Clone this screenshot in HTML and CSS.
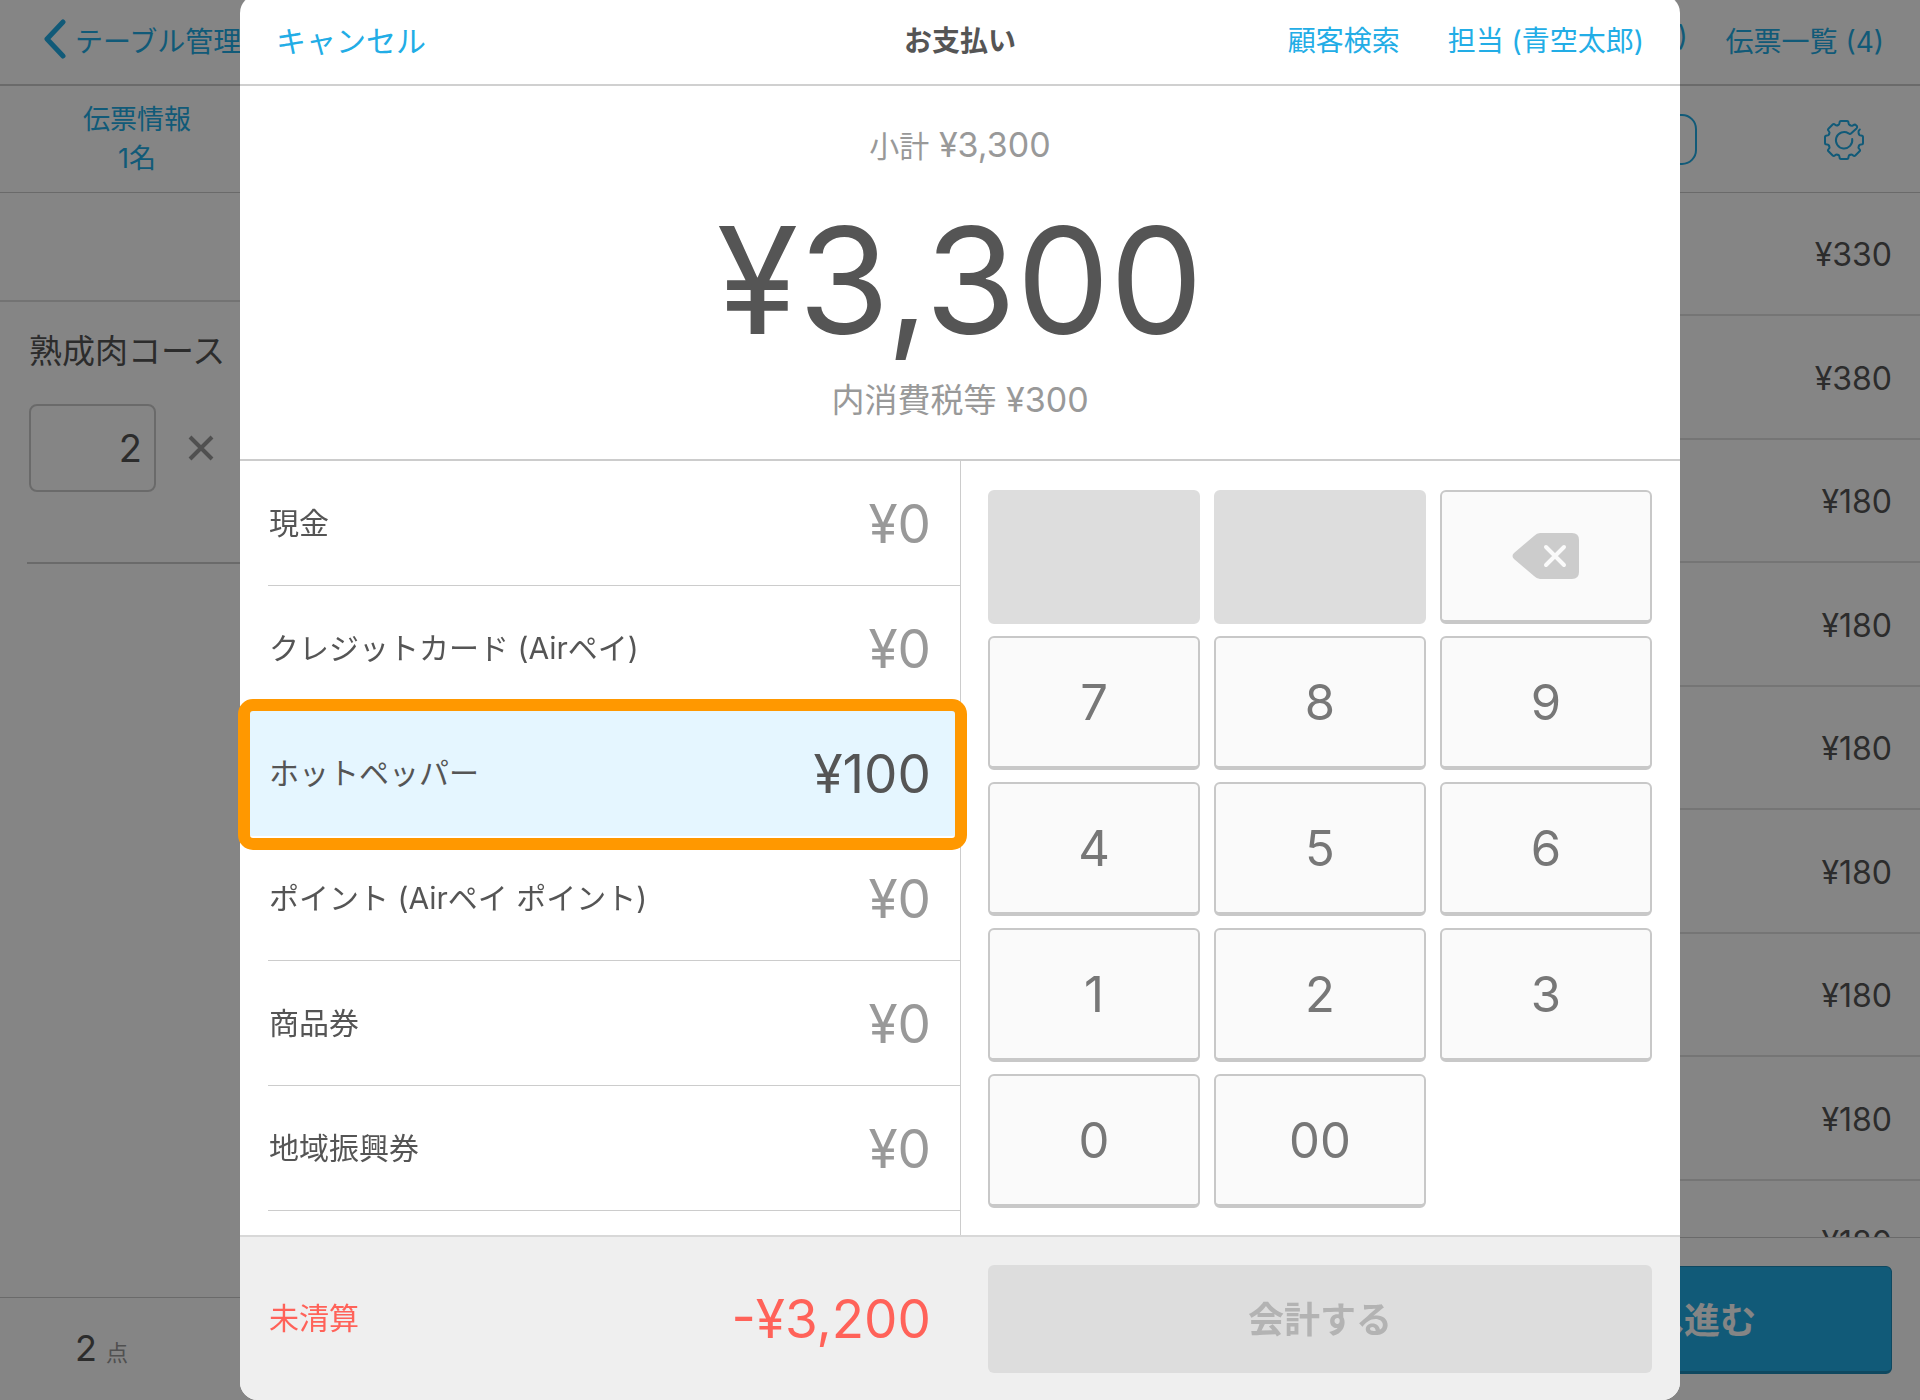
FILE: index.html
```html
<!DOCTYPE html>
<html lang="ja">
<head>
  <meta charset="UTF-8">
  <title>お支払い</title>
  <link rel="stylesheet" href="styles.css">
</head>
<body>
  <div class="register">
    <header class="navbar">
      <a href="#" class="back-link">
        <svg width="24" height="42" viewBox="0 0 24 42"><path d="M20 3 L4 20 L20 37" fill="none" stroke="currentColor" stroke-width="5" stroke-linecap="round" stroke-linejoin="round"/></svg>
        テーブル管理
      </a>
      <nav class="nav-links">
        <a href="#">(2)</a>
        <a href="#">伝票一覧 (4)</a>
      </nav>
    </header>

    <div class="columns">
      <section class="order">
        <div class="order-info">
          <a href="#">伝票情報<br>1名</a>
        </div>
        <div class="order-blank"></div>
        <div class="order-item">
          <label for="quantity">熟成肉コース</label>
          <div class="quantity">
            <input type="text" id="quantity" value="2">
            <svg width="26" height="26" viewBox="0 0 26 26"><path d="M2 2 L24 24 M24 2 L2 24" fill="none" stroke="#999" stroke-width="4"/></svg>
          </div>
        </div>
        <div class="order-count"><span class="count">2</span><span class="unit">点</span></div>
      </section>

      <section class="menu">
        <div class="menu-tools">
          <button type="button" class="menu-tab" aria-label="メニュー"></button>
          <button type="button" class="gear-btn" aria-label="設定">
            <svg width="40" height="40" viewBox="0 0 40 40" fill="none" stroke="currentColor" stroke-width="2" stroke-linecap="round" stroke-linejoin="round">
              <path id="tooth" d="M13.900 5.200 Q15.500 4.800 15.500 3 Q15.500 1 17 1 H23 Q24.500 1 24.500 3 Q24.500 4.800 26.100 5.200"/>
              <use href="#tooth" transform="rotate(90 20 20)"/>
              <use href="#tooth" transform="rotate(135 20 20)"/>
              <use href="#tooth" transform="rotate(180 20 20)"/>
              <use href="#tooth" transform="rotate(225 20 20)"/>
              <use href="#tooth" transform="rotate(270 20 20)"/>
              <use href="#tooth" transform="rotate(315 20 20)"/>
              <path d="M26.100 5.200 Q27.500 6.300 29 5.300 Q31 4 32 5.200 L33 6.200 Q33.500 7.500 32.500 8.500 L27 13.500 Q26 14.500 24.500 13.300 A8.200 8.200 0 1 0 28.200 19"/>
              <path d="M35.800 9.500 Q34 11 34.500 12.500 L34.800 13.900"/>
            </svg>
          </button>
        </div>
        <ul class="menu-list">
          <li>¥330</li>
          <li>¥380</li>
          <li>¥180</li>
          <li>¥180</li>
          <li>¥180</li>
          <li>¥180</li>
          <li>¥180</li>
          <li>¥180</li>
          <li>¥180</li>
        </ul>
        <div class="menu-footer">
          <button type="button" class="next-btn">会計へ進む</button>
        </div>
      </section>
    </div>
  </div>

  <div class="overlay">
    <div class="modal" role="dialog" aria-labelledby="modalTitle">
      <header class="modal-header">
        <a href="#" class="cancel-link">キャンセル</a>
        <h1 id="modalTitle">お支払い</h1>
        <div class="modal-links">
          <a href="#">顧客検索</a>
          <a href="#">担当 (青空太郎)</a>
        </div>
      </header>

      <div class="summary">
        <div class="subtotal"><span>小計</span> ¥3,300</div>
        <div class="total">¥3,300</div>
        <div class="tax"><span>内消費税等</span> ¥300</div>
      </div>

      <div class="payment">
        <ul class="method-list">
          <li class="method"><span class="name">現金</span><span class="amount">¥0</span></li>
          <li class="method"><span class="name">クレジットカード (Airペイ)</span><span class="amount">¥0</span></li>
          <li class="method selected"><span class="name">ホットペッパー</span><span class="amount">¥100</span></li>
          <li class="method"><span class="name">ポイント (Airペイ ポイント)</span><span class="amount">¥0</span></li>
          <li class="method"><span class="name">商品券</span><span class="amount">¥0</span></li>
          <li class="method"><span class="name">地域振興券</span><span class="amount">¥0</span></li>
        </ul>
        <div class="keypad">
          <button type="button" class="key" disabled></button>
          <button type="button" class="key" disabled></button>
          <button type="button" class="key" aria-label="削除">
            <svg width="68" height="48" viewBox="0 0 68 48"><path d="M28 1 H60 Q67 1 67 8 V40 Q67 47 60 47 H28 Q25 47 22 44 L2 27 Q-1 24 2 21 L22 4 Q25 1 28 1 Z" fill="#ccc"/><path d="M34 15 L52 33 M52 15 L34 33" fill="none" stroke="#fafafa" stroke-width="4" stroke-linecap="round"/></svg>
          </button>
          <button type="button" class="key">7</button>
          <button type="button" class="key">8</button>
          <button type="button" class="key">9</button>
          <button type="button" class="key">4</button>
          <button type="button" class="key">5</button>
          <button type="button" class="key">6</button>
          <button type="button" class="key">1</button>
          <button type="button" class="key">2</button>
          <button type="button" class="key">3</button>
          <button type="button" class="key">0</button>
          <button type="button" class="key">00</button>
        </div>
      </div>

      <footer class="modal-footer">
        <div class="unpaid"><span class="name">未清算</span><span class="amount">-¥3,200</span></div>
        <div class="checkout">
          <button type="button" class="checkout-btn" disabled>会計する</button>
        </div>
      </footer>
    </div>
  </div>
</body>
</html>
```
FILE: styles.css
```css
* {
  box-sizing: border-box;
}

body {
  margin: 0;
  font-family: Inter, "Noto Sans CJK JP", sans-serif;
  font-size: 28px;
  color: #555;
  background-color: #fff;
}

a {
  color: #22ade6;
  text-decoration: none;
}

ul {
  list-style: none;
  margin: 0;
  padding: 0;
}

button, input {
  font-family: inherit;
  color: inherit;
}

svg {
  display: block;
}

/* register screen behind the dialog */
.register {
  display: flex;
  flex-direction: column;
  height: 100vh;
  overflow: hidden;
}

.navbar {
  display: flex;
  justify-content: space-between;
  align-items: center;
  height: 86px;
  padding: 0 36px 4px 43px;
  border-bottom: 2px solid #ccc;
}

.back-link {
  display: flex;
  align-items: center;
  gap: 8px;
}

.nav-links {
  display: flex;
  gap: 38px;
}

.columns {
  display: grid;
  grid-template-columns: 1fr 1fr;
  flex: 1;
  min-height: 0;
}

.order, .menu {
  display: flex;
  flex-direction: column;
  min-height: 0;
}

.order-info {
  height: 107px;
  padding-top: 14px;
  border-bottom: 1px solid #ccc;
}

.order-info a {
  display: block;
  width: 274px;
  font-size: 27px;
  line-height: 39px;
  text-align: center;
}

.order-blank {
  height: 109px;
  border-bottom: 2px solid #ddd;
}

.order-item {
  flex: 1;
  margin-left: 27px;
}

.order-item label {
  display: block;
  padding: 24px 2px 28px;
  font-size: 33px;
  line-height: 50px;
}

.quantity {
  display: flex;
  align-items: center;
  gap: 32px;
  padding: 0 2px 70px;
  border-bottom: 2px solid #ccc;
}

.quantity input {
  width: 127px;
  height: 88px;
  padding: 0 12px;
  border: 2px solid #ccc;
  border-radius: 8px;
  background-color: #fff;
  font-size: 38px;
  text-align: right;
}

.order-count {
  display: flex;
  align-items: baseline;
  gap: 9px;
  height: 103px;
  padding: 28px 75px;
  border-top: 1px solid #ccc;
}

.count {
  font-size: 36px;
}

.unit {
  font-size: 22px;
  color: #999;
}

.menu-tools {
  display: flex;
  justify-content: space-between;
  align-items: center;
  height: 107px;
  padding: 0 56px 0 28px;
  border-bottom: 1px solid #ccc;
}

.menu-tab {
  width: 709px;
  height: 51px;
  border: 2px solid #22ade6;
  border-radius: 15px;
  background: none;
}

.gear-btn {
  padding: 2px 0 0;
  border: none;
  background: none;
  color: #22ade6;
}

.menu-list {
  flex: 1;
  min-height: 0;
  overflow: hidden;
}

.menu-list li {
  display: flex;
  justify-content: flex-end;
  align-items: center;
  height: 123px;
  padding: 2px 28px 0 0;
  border-bottom: 2px solid #e0e0e0;
  font-size: 32px;
}

.menu-list li:nth-child(even) {
  height: 124px;
}

.menu-footer {
  display: flex;
  justify-content: flex-end;
  height: 163px;
  padding: 28px;
  border-top: 1px solid #ccc;
}

.next-btn {
  width: 452px;
  height: 108px;
  padding-bottom: 4px;
  border: 1px solid #1c8ab8;
  border-bottom-width: 3px;
  border-radius: 6px;
  background-color: #22ade6;
  color: #fff;
  font-size: 36px;
  font-weight: bold;
}

/* payment dialog */
.overlay {
  position: fixed;
  top: 0;
  left: 0;
  width: 100%;
  height: 100%;
  background-color: rgba(0, 0, 0, 0.48);
  display: flex;
  justify-content: center;
}

.modal {
  display: flex;
  flex-direction: column;
  width: 75%;
  margin-top: -5px;
  border-radius: 18px;
  background-color: #fff;
}

.modal-header {
  display: grid;
  grid-template-columns: 1fr auto 1fr;
  align-items: center;
  flex-shrink: 0;
  height: 91px;
  padding: 0 36px 2px 36px;
  border-bottom: 2px solid #d0d0d0;
}

.modal-header h1 {
  margin: 0;
  font-size: 28px;
}

.cancel-link {
  font-size: 30px;
}

.modal-links {
  display: flex;
  justify-content: flex-end;
  gap: 48px;
}

.summary {
  padding: 34px 0;
  border-bottom: 2px solid #ccc;
  text-align: center;
  color: #999;
}

.subtotal, .tax {
  height: 50px;
  font-size: 34px;
  line-height: 50px;
}

.subtotal span {
  font-size: 30px;
}

.tax span {
  font-size: 33px;
}

.total {
  margin: 31px 0 14px;
  font-size: 148px;
  line-height: 160px;
  color: #555;
}

.payment {
  display: grid;
  grid-template-columns: 1fr 1fr;
  flex: 1;
}

.method {
  position: relative;
  display: flex;
  justify-content: space-between;
  align-items: center;
  height: 125px;
  padding: 0 29px;
}

.method::before {
  content: "";
  position: absolute;
  left: 28px;
  right: 0;
  bottom: 0;
  height: 1px;
  background-color: #ccc;
}

.name {
  padding-bottom: 6px;
  font-size: 30px;
}

.amount {
  font-size: 53px;
  color: #999;
}

.selected {
  z-index: 1;
  background-color: #e5f6ff;
}

.selected::before {
  display: none;
}

.selected .amount {
  color: #555;
}

/* frame round the selected method */
.selected::after {
  content: "";
  position: absolute;
  inset: -12px -7px -14px -2px;
  border: 12px solid #ff9800;
  border-radius: 15px;
}

.keypad {
  display: grid;
  grid-template-columns: repeat(3, 1fr);
  grid-auto-rows: 134px;
  gap: 12px 14px;
  padding: 29px 28px 27px 27px;
  border-left: 1px solid #ccc;
}

.key {
  display: flex;
  justify-content: center;
  align-items: center;
  padding: 0;
  border: 2px solid #c8c8c8;
  border-bottom-width: 4px;
  border-radius: 6px;
  background-color: #fafafa;
  font-size: 49px;
  color: #777;
}

.key:disabled {
  border-color: #ddd;
  background-color: #ddd;
}

.modal-footer {
  display: grid;
  grid-template-columns: 1fr 1fr;
  border-top: 2px solid #d8d8d8;
  border-radius: 0 0 18px 18px;
  background-color: #efefef;
}

.unpaid {
  display: flex;
  justify-content: space-between;
  align-items: center;
  padding: 0 29px;
  color: #ff6259;
}

.unpaid .amount {
  color: #ff6259;
}

.checkout {
  padding: 28px 28px 27px;
}

.checkout-btn {
  width: 100%;
  height: 108px;
  padding-bottom: 6px;
  border: none;
  border-radius: 6px;
  background-color: #ddd;
  color: #b3b3b3;
  font-size: 36px;
  font-weight: bold;
}
```
